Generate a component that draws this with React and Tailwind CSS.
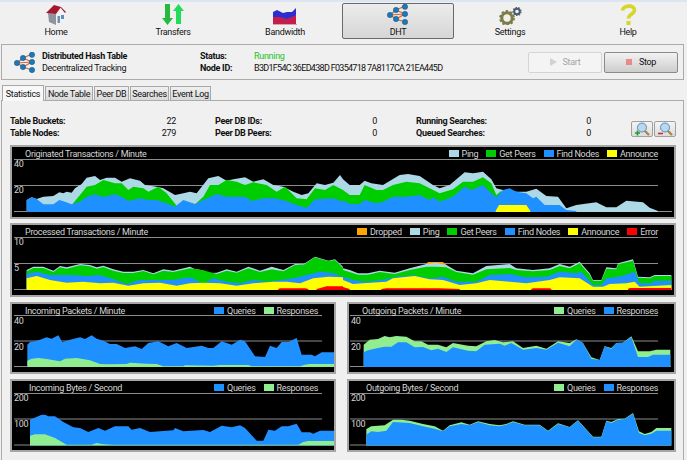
import { Fragment } from "react";

// chart outlines were read off 3x crops, so points are stored in crop units
const toPts = (left, right, oy) => {
  const out = [];
  for (let i = 0; i < left.length; i += 2) out.push([left[i] / 3, oy + left[i + 1] / 3]);
  for (let i = 0; i < right.length; i += 2) out.push([343 + right[i] / 3, oy + right[i + 1] / 3]);
  return out;
};

const areaPoints = (pts, baseY) => {
  const first = pts[0][0];
  const last = pts[pts.length - 1][0];
  return [[first, baseY], ...pts, [last, baseY]].map((p) => p.join(",")).join(" ");
};

const BLUE = "#1e90ff";
const LIGHT = "#add8e6";
const GREEN = "#00cd00";
const YELLOW = "#ffff00";
const PALE = "#90ee90";
const RED = "#ff0000";
const ORANGE = "#ffa500";

const originated = [
  { color: LIGHT, pts: toPts(
    [80,180,95,172,110,177,130,170,160,168,178,157,190,160,200,155,215,158,225,145,245,132,260,113,285,108,300,120,320,113,345,113,365,125,390,115,420,122,435,135,470,140,490,145,525,165,550,160,570,155,590,160,625,115,655,108,680,122,700,118,735,112,760,125,790,118,820,135,850,140,880,155,905,165,925,160,950,130,975,135,1000,128,1020,105],
    [0,118,20,135,50,135,65,122,85,130,120,135,170,105,195,102,230,108,270,135,290,145,320,135,365,97,390,100,420,95,445,118,460,145,480,150,520,155,550,155,580,146,610,168,645,170,670,205,700,195,760,187,790,202,820,202,850,182,900,187,920,203,945,213], 140) },
  { color: GREEN, pts: toPts(
    [215,195,240,165,260,140,285,135,310,120,345,130,365,130,385,150,400,140,430,145,445,155,475,140,500,160,530,197,550,185,585,193,610,170,630,135,655,135,680,120,710,125,735,135,760,127,800,135,830,155,855,140,890,175,920,178,945,145,975,150,1000,135,1029,150],
    [0,150,20,165,50,165,65,135,100,150,120,150,150,135,190,125,230,130,260,145,290,160,330,148,360,125,390,125,420,112,445,130,460,165,475,152], 140) },
  { color: BLUE, pts: toPts(
    [80,180,95,172,110,177,130,193,160,193,178,180,195,185,215,193,240,185,260,170,285,163,310,170,345,163,365,170,385,183,420,175,445,180,470,180,500,190,525,200,550,180,585,192,610,180,650,162,680,170,710,170,735,170,755,183,790,175,820,175,850,180,890,195,920,203,945,178,1000,175,1029,185],
    [0,180,20,192,50,192,65,180,100,190,120,185,150,170,190,170,230,165,260,180,270,172,290,185,330,170,365,140,385,150,420,135,445,160,460,172,480,150,500,145,520,155,550,160,570,175,580,170,605,195,650,195,670,210,700,213], 140) },
  { color: YELLOW, pts: toPts([], [458,213,468,195,550,195,562,213], 140) },
];

const processed = [
  { color: ORANGE, pts: toPts([575,386,590,387,612,392], [], 140) },
  { color: ORANGE, pts: toPts([], [240,382,255,366,300,366,318,382], 140) },
  { color: LIGHT, pts: toPts(
    [80,390,100,380,130,380,160,392,180,378,200,382,240,372,270,375,290,382,310,377,340,388,370,395,400,395,430,390,460,400,490,388,520,392,570,380,610,400,650,398,680,388,710,395,745,380,780,392,815,380,850,390,885,372,910,373,945,350,985,362,1005,358,1029,380],
    [0,385,20,390,45,400,75,400,110,392,155,398,200,385,250,372,280,368,310,375,340,392,390,400,430,378,500,372,520,385,570,390,620,385,650,372,680,380,710,365,740,400,750,420,775,420,790,382,820,385,825,370,870,358,885,410,920,412,935,405,985,405], 140) },
  { color: GREEN, pts: toPts(
    [80,394,100,384,130,384,160,396,180,382,200,386,240,376,270,379,290,386,310,381,340,392,370,399,400,399,430,393,460,403,490,392,520,396,570,385,610,391,650,402,680,392,710,398,745,385,780,396,815,388,850,394,885,375,910,375,945,352,985,364,1005,360,1029,383],
    [0,390,20,396,45,404,75,404,110,396,155,402,200,390,250,380,280,380,310,382,340,396,390,404,430,388,500,384,520,390,570,394,620,390,650,378,680,385,710,370,740,404,750,422,775,422,790,386,820,388,825,373,870,362,885,413,920,415,935,408,985,408], 140) },
  { color: BLUE, pts: toPts(
    [80,402,110,395,150,405,180,405,220,405,260,408,300,405,340,418,380,432,420,420,460,420,520,420,570,412,610,430,640,415,680,425,720,430,760,420,800,425,840,420,880,415,920,405,960,395,1000,400,1029,410],
    [0,410,30,420,70,425,120,420,160,410,210,405,260,415,300,410,340,425,400,425,440,405,500,402,550,412,610,410,650,395,700,400,715,395,750,435,775,435,790,415,830,410,875,395,890,430,925,430,935,422,985,422], 140) },
  { color: YELLOW, pts: toPts(
    [80,415,110,408,150,420,200,428,250,425,300,430,340,428,385,437,430,430,480,428,530,437,570,430,610,428,660,430,710,437,760,430,820,425,860,425,900,430,940,415,985,410,1029,412],
    [0,420,30,432,60,430,130,425,150,415,215,408,260,418,300,420,350,435,400,430,440,420,500,425,550,430,620,420,650,412,710,415,750,440,780,440,800,432,850,430,875,425,890,440,985,435], 140) },
  { color: RED, pts: toPts([835,447,840,445,915,445,925,447], [], 140) },
  { color: RED, pts: toPts([950,447,980,439,1029,439], [0,441,20,447], 140) },
  { color: RED, pts: toPts([], [115,447,130,445,290,445,350,447], 140) },
  { color: RED, pts: toPts([], [565,447,570,445,620,445,625,447], 140) },
  { color: RED, pts: toPts([], [855,447,860,444,985,444], 140) },
];

const inPackets = [
  { color: BLUE, pts: toPts([82,140,90,132,105,130,120,125,140,118,155,122,175,112,187,133,210,125,240,118,255,123,275,112,290,122,310,128,330,138,350,138,375,150,405,145,425,153,445,135,475,130,505,145,530,135,560,150,605,143,625,150,640,150,665,130,695,140,720,125,735,130,765,175,795,177,810,143,830,150,845,132,865,132,890,120,905,170,935,170,945,175,965,163,1005,163], [], 298) },
  { color: PALE, pts: toPts([82,188,95,182,115,180,140,183,180,190,195,182,230,180,270,187,300,198,320,199,380,198,390,194,440,197,470,198,490,205,550,205,555,202,640,203,660,201,745,201,755,205,900,205,915,200,930,198,1005,198], [], 298) },
];

const inBytes = [
  { color: BLUE, pts: toPts([90,365,125,350,135,350,145,355,165,355,190,372,220,388,240,390,265,402,295,390,315,398,345,385,385,385,395,395,420,390,450,402,520,397,525,390,550,400,610,396,630,402,665,383,695,388,720,382,735,390,770,428,790,428,805,395,825,398,845,385,865,385,890,377,905,403,930,403,940,407,960,398,1005,398], [], 298) },
  { color: PALE, pts: toPts([90,413,105,409,135,409,165,420,200,440,275,440,290,435,305,438,335,440,895,440,910,432,925,429,1005,429], [], 298) },
];

const outPackets = [
  { color: PALE, pts: toPts([], [62,140,80,125,105,123,125,114,140,118,160,114,190,116,215,130,235,130,255,140,285,140,310,148,330,135,375,143,400,145,430,130,455,126,480,133,510,130,540,150,580,143,610,152,645,130,680,135,700,124,720,135,745,178,770,186,785,145,805,150,820,135,840,134,865,115,885,160,920,160,940,155,982,155], 298) },
  { color: BLUE, pts: toPts([], [62,163,75,157,105,150,125,146,145,146,165,133,190,133,215,148,240,147,265,157,285,152,310,162,330,148,375,158,400,160,425,140,470,137,485,143,505,135,540,155,580,150,610,155,645,134,680,145,700,125,720,135,745,182,770,186,785,145,805,152,820,135,840,134,865,118,885,177,915,177,930,170,982,170], 298) },
];

const outBytes = [
  { color: PALE, pts: toPts([], [70,393,85,385,125,382,150,365,175,365,200,368,240,378,275,385,300,398,320,382,355,373,380,380,405,370,440,378,470,382,490,378,510,370,545,380,590,380,615,398,645,376,680,387,705,367,750,416,775,416,790,368,805,372,825,363,845,362,870,345,888,400,905,408,925,402,940,390,985,390], 298) },
  { color: BLUE, pts: toPts([], [70,410,85,400,105,402,130,398,150,372,200,375,240,385,275,392,300,400,320,385,355,378,380,382,405,372,440,382,470,385,490,380,510,372,545,382,590,382,615,400,645,378,680,388,705,368,750,418,775,418,790,370,805,375,825,365,845,363,870,347,888,405,905,412,925,407,940,398,985,398], 298) },
];

const Chart = ({ box, title, titleClass, legend, layers, labels, lines, heightClass, widthClass }) => {
  const [x, y, w, h] = box;
  return (
    <div className={`relative bg-black border-2 border-[#a6a6a6] ${heightClass} ${widthClass}`}>
      <svg
        className="absolute inset-0 w-full h-full"
        viewBox={`${x + 2} ${y + 2} ${w - 4} ${h - 4}`}
        preserveAspectRatio="none"
      >
        <line x1={lines.left} x2={lines.right} y1={lines.top + 0.5} y2={lines.top + 0.5} stroke="#8c8c8c" />
        <line x1={lines.left} x2={lines.right} y1={lines.mid + 0.5} y2={lines.mid + 0.5} stroke="#8c8c8c" />
        <line x1={lines.left} x2={lines.baseRight} y1={lines.base + 0.5} y2={lines.base + 0.5} stroke="#8c8c8c" />
        {layers.map((l, i) => (
          <polygon key={i} points={areaPoints(l.pts, lines.base + 1)} fill={l.color} />
        ))}
      </svg>
      <div className={`relative flex items-center justify-between h-[13px] pr-[16px] leading-[12px] text-[#d6d6d6] ${titleClass}`}>
        <span>{title}</span>
        <div className="flex gap-[8px]">
          {legend.map(([name, color]) => (
            <span key={name} className="flex items-center gap-[3px]">
              <i className="block w-[10px] h-[7px]" style={{ backgroundColor: color }} />
              {name}
            </span>
          ))}
        </div>
      </div>
      <span className="absolute left-[2px] top-[11px] leading-[12px] text-[#d6d6d6]">{labels[0]}</span>
      <span className="absolute left-[2px] top-[37px] leading-[12px] text-[#d6d6d6]">{labels[1]}</span>
    </div>
  );
};

const HomeIcon = () => (
  <svg width="21" height="20" viewBox="0 0 21 20">
    <polygon points="2,8 10,9 10,20 3,17" fill="#8f949c" />
    <polygon points="10,8 14,3 19,8 19,17 10,20" fill="#f2f2f2" />
    <polygon points="0,8 8,0 15,2 10,9" fill="#a5162f" />
    <polygon points="14,2 15,2 20,7 19,8" fill="#a5162f" />
    <rect x="15" y="10" width="3" height="4" fill="#5b8fc4" />
    <rect x="11.5" y="11" width="2.5" height="7" fill="#6f8fb0" />
  </svg>
);

const TransfersIcon = () => (
  <svg width="22" height="21" viewBox="0 0 22 21">
    <polygon points="3,0 8,0 8,14 11,14 5.5,21 0,14 3,14" fill="#28b83c" />
    <polygon points="14,20 19,20 19,7 22,7 16.5,0 11,7 14,7" fill="#22dc5a" />
  </svg>
);

const BandwidthIcon = () => (
  <svg width="24" height="17" viewBox="0 0 24 17">
    <polygon points="0,4 4,2 10,5 14,4 19,4 23,0 23,16 0,16" fill="#2b2fd0" />
    <polygon points="0,9 7,9 14,11 23,7 23,16 0,16" fill="#c41e4e" />
    <line x1="0" x2="24" y1="16.5" y2="16.5" stroke="#d9a0b0" />
  </svg>
);

const DhtIcon = () => (
  <svg width="22" height="21" viewBox="0 0 22 21">
    <g stroke="#d9652f" strokeWidth="1.2">
      <line x1="3" y1="11" x2="9" y2="6" />
      <line x1="3" y1="11" x2="9" y2="15" />
      <line x1="3" y1="11" x2="18" y2="10" />
      <line x1="9" y1="6" x2="18" y2="2" />
      <line x1="9" y1="6" x2="18" y2="10" />
      <line x1="9" y1="15" x2="18" y2="10" />
      <line x1="9" y1="15" x2="18" y2="18" />
    </g>
    <g fill="#1c78b8" stroke="#10466e" strokeWidth="0.4">
      <circle cx="3" cy="11" r="2.7" />
      <circle cx="9" cy="6" r="2.7" />
      <circle cx="9" cy="15" r="2.7" />
      <circle cx="18" cy="2.8" r="2.7" />
      <circle cx="18" cy="10" r="2.7" />
      <circle cx="18" cy="18" r="2.7" />
    </g>
  </svg>
);

const SettingsIcon = () => (
  <svg width="23" height="18" viewBox="0 0 23 18">
    <circle cx="8" cy="11" r="5.2" fill="none" stroke="#7d7d45" strokeWidth="3" />
    <circle cx="8" cy="11" r="7" fill="none" stroke="#7d7d45" strokeWidth="1.8" strokeDasharray="2.4 2.1" />
    <circle cx="18" cy="4.5" r="2.8" fill="none" stroke="#4d5a6e" strokeWidth="2" />
    <circle cx="18" cy="4.5" r="4" fill="none" stroke="#4d5a6e" strokeWidth="1.2" strokeDasharray="1.5 1.3" />
  </svg>
);

const HelpIcon = () => (
  <svg width="17" height="21" viewBox="0 0 17 21">
    <path d="M2.5 6.5C3 1 14.5 0.5 14.5 6C14.5 10 8.5 10 8.5 14.5" fill="none" stroke="#d5d52a" strokeWidth="3.6" />
    <rect x="6.5" y="17" width="4" height="4" fill="#d5d52a" />
  </svg>
);

const ZoomIcon = ({ kind }) => (
  <svg width="15" height="14" viewBox="0 0 15 14">
    <line x1="9" y1="8" x2="14" y2="13" stroke="#a8843c" strokeWidth="2.2" />
    <circle cx="7" cy="5.5" r="4.5" fill="#b8d8f0" stroke="#5c8cb4" />
    {kind === "in" ? (
      <path d="M0 11h5M2.5 8.5v5" stroke="#1c9c2c" strokeWidth="1.6" />
    ) : (
      <path d="M0 11.5h5" stroke="#c83030" strokeWidth="1.6" />
    )}
  </svg>
);

const TOOLS = [
  { name: "Home", icon: <HomeIcon />, margin: "" },
  { name: "Transfers", icon: <TransfersIcon />, margin: "ml-[5px]" },
  { name: "Bandwidth", icon: <BandwidthIcon />, margin: "" },
  { name: "DHT", icon: <DhtIcon />, margin: "ml-[1px]", active: true },
  { name: "Settings", icon: <SettingsIcon />, margin: "" },
  { name: "Help", icon: <HelpIcon />, margin: "ml-[6px]" },
];

const TABS = ["Node Table", "Peer DB", "Searches", "Event Log"];

const STATS = [
  ["Table Buckets:", "22", "Peer DB IDs:", "0", "Running Searches:", "0"],
  ["Table Nodes:", "279", "Peer DB Peers:", "0", "Queued Searches:", "0"],
];

const App = () => {
  return (
    <div
      className="w-[687px] h-[460px] overflow-hidden bg-[#f0f0f0] text-[9px] leading-[12px] tracking-[-0.3px] text-[#111]"
      style={{ fontFamily: 'Roboto, "Liberation Sans", Arial, sans-serif' }}
    >
      <div className="h-[2px] bg-[#dbe6f2]" />

      {/* Toolbar */}
      <div className="flex h-[42px] pt-[1px]">
        {TOOLS.map((t) => (
          <div
            key={t.name}
            className={`flex flex-col items-center w-[112px] h-[36px] rounded-[2px] ${t.margin} ${
              t.active ? "border border-[#6a6a6a] bg-gradient-to-b from-[#ececec] to-[#d6d6d6]" : "border border-transparent"
            }`}
          >
            <div className="flex items-end justify-center h-[23px]">{t.icon}</div>
            <span className="mt-[1px]">{t.name}</span>
          </div>
        ))}
      </div>

      {/* DHT header */}
      <div className="flex items-center ml-[1px] w-[683px] h-[36px] border border-[#ababab]">
        <div className="ml-[12px] w-[22px] h-[21px]">
          <DhtIcon />
        </div>
        <div className="ml-[6px] w-[158px] flex flex-col">
          <b className="font-bold">Distributed Hash Table</b>
          <span>Decentralized Tracking</span>
        </div>
        <div className="flex flex-col w-[54px] font-bold">
          <span>Status:</span>
          <span>Node ID:</span>
        </div>
        <div className="flex flex-col w-[274px]">
          <span className="text-[#22c322]">Running</span>
          <span className="whitespace-nowrap tracking-[-0.7px]">B3D1F54C 36ED438D F0354718 7A8117CA 21EA445D</span>
        </div>
        <div className="flex gap-[2px]">
          <div className="flex items-center justify-center gap-[6px] w-[74px] h-[21px] border border-[#d4d4d4] rounded-[2px] bg-[#f4f4f4] text-[#a4a4a4]">
            <svg width="7" height="8" viewBox="0 0 7 8"><polygon points="0,0 7,4 0,8" fill="#d2d2d2" /></svg>
            Start
          </div>
          <div className="flex items-center justify-center gap-[7px] w-[74px] h-[21px] border border-[#8a8a8a] rounded-[2px] bg-gradient-to-b from-[#f2f2f2] to-[#cdcdcd]">
            <i className="block w-[6px] h-[6px] bg-[#e88a8a]" />
            Stop
          </div>
        </div>
      </div>

      {/* Tabs */}
      <div className="flex items-end mt-[5px] ml-[2px] h-[15px] relative z-10">
        <div className="flex items-center justify-center w-[42px] h-[16px] bg-[#f8f8f8] border border-b-0 border-[#a8a8a8] -mb-[1px]">Statistics</div>
        {TABS.map((t, i) => (
          <div
            key={t}
            className={`flex items-center justify-center whitespace-nowrap h-[14px] bg-gradient-to-b from-[#f0f0f0] to-[#d9d9d9] border border-b-0 border-[#a8a8a8] ml-[1px] ${
              i === 0 ? "w-[48px]" : i === 1 ? "w-[35px]" : i === 2 ? "w-[39px]" : "w-[41px]"
            }`}
          >
            {t}
          </div>
        ))}
      </div>

      {/* Tab pane */}
      <div className="ml-[1px] w-[683px] h-[380px] border border-[#ababab] pl-[8px] pt-[14px]">
        <div className="flex h-[24px]">
          <div className="grid grid-cols-[166px_162px_175px] gap-x-[39px] auto-rows-[12px]">
            {STATS.map((row) => (
              <Fragment key={row[0]}>
                <div className="flex justify-between"><b>{row[0]}</b><span>{row[1]}</span></div>
                <div className="flex justify-between"><b>{row[2]}</b><span>{row[3]}</span></div>
                <div className="flex justify-between"><b>{row[4]}</b><span>{row[5]}</span></div>
              </Fragment>
            ))}
          </div>
          <div className="flex gap-[1px] ml-[40px] mt-[6px] h-[16px]">
            <div className="flex items-center justify-center w-[22px] h-[16px] border border-[#a0a0a0] rounded-[2px] bg-gradient-to-b from-[#f4f4f4] to-[#dcdcdc]"><ZoomIcon kind="in" /></div>
            <div className="flex items-center justify-center w-[22px] h-[16px] border border-[#a0a0a0] rounded-[2px] bg-gradient-to-b from-[#f4f4f4] to-[#dcdcdc]"><ZoomIcon kind="out" /></div>
          </div>
        </div>

        <div className="flex flex-col mt-[6px]">
          <Chart
            box={[10, 145, 666, 74]}
            widthClass="w-[666px]"
            heightClass="h-[74px]"
            title="Originated Transactions / Minute"
            titleClass="pl-[13px]"
            legend={[["Ping", LIGHT], ["Get Peers", GREEN], ["Find Nodes", BLUE], ["Announce", YELLOW]]}
            labels={["40", "20"]}
            lines={{ left: 14, right: 658, baseRight: 672, top: 159, mid: 185, base: 211 }}
            layers={originated}
          />
          <div className="mt-[4px]">
            <Chart
              box={[10, 223, 666, 74]}
              widthClass="w-[666px]"
              heightClass="h-[74px]"
              title="Processed Transactions / Minute"
              titleClass="pl-[13px]"
              legend={[["Dropped", ORANGE], ["Ping", LIGHT], ["Get Peers", GREEN], ["Find Nodes", BLUE], ["Announce", YELLOW], ["Error", RED]]}
              labels={["10", "5"]}
              lines={{ left: 14, right: 658, baseRight: 672, top: 237, mid: 263, base: 289 }}
              layers={processed}
            />
          </div>
          <div className="grid grid-cols-[326px_329px] gap-x-[11px] mt-[5px]">
            <div className="flex flex-col gap-[5px]">
              <Chart
                box={[10, 302, 326, 72]}
                widthClass="w-[326px]"
                heightClass="h-[72px]"
                title="Incoming Packets / Minute"
                titleClass="pl-[13px]"
                legend={[["Queries", BLUE], ["Responses", PALE]]}
                labels={["40", "20"]}
                lines={{ left: 14, right: 322, baseRight: 335, top: 315, mid: 340.5, base: 366 }}
                layers={inPackets}
              />
              <Chart
                box={[10, 379, 326, 73]}
                widthClass="w-[326px]"
                heightClass="h-[73px]"
                title="Incoming Bytes / Second"
                titleClass="pl-[17px]"
                legend={[["Queries", BLUE], ["Responses", PALE]]}
                labels={["200", "100"]}
                lines={{ left: 14, right: 322, baseRight: 335, top: 393, mid: 418.5, base: 444.5 }}
                layers={inBytes}
              />
            </div>
            <div className="flex flex-col gap-[5px]">
              <Chart
                box={[347, 302, 329, 72]}
                widthClass="w-[329px]"
                heightClass="h-[72px]"
                title="Outgoing Packets / Minute"
                titleClass="pl-[13px]"
                legend={[["Queries", PALE], ["Responses", BLUE]]}
                labels={["40", "20"]}
                lines={{ left: 350, right: 658, baseRight: 671, top: 315, mid: 340.5, base: 366 }}
                layers={outPackets}
              />
              <Chart
                box={[347, 379, 329, 73]}
                widthClass="w-[329px]"
                heightClass="h-[73px]"
                title="Outgoing Bytes / Second"
                titleClass="pl-[17px]"
                legend={[["Queries", PALE], ["Responses", BLUE]]}
                labels={["200", "100"]}
                lines={{ left: 350, right: 658, baseRight: 671, top: 393, mid: 418.5, base: 444.5 }}
                layers={outBytes}
              />
            </div>
          </div>
        </div>
      </div>
    </div>
  );
};

export default App;
